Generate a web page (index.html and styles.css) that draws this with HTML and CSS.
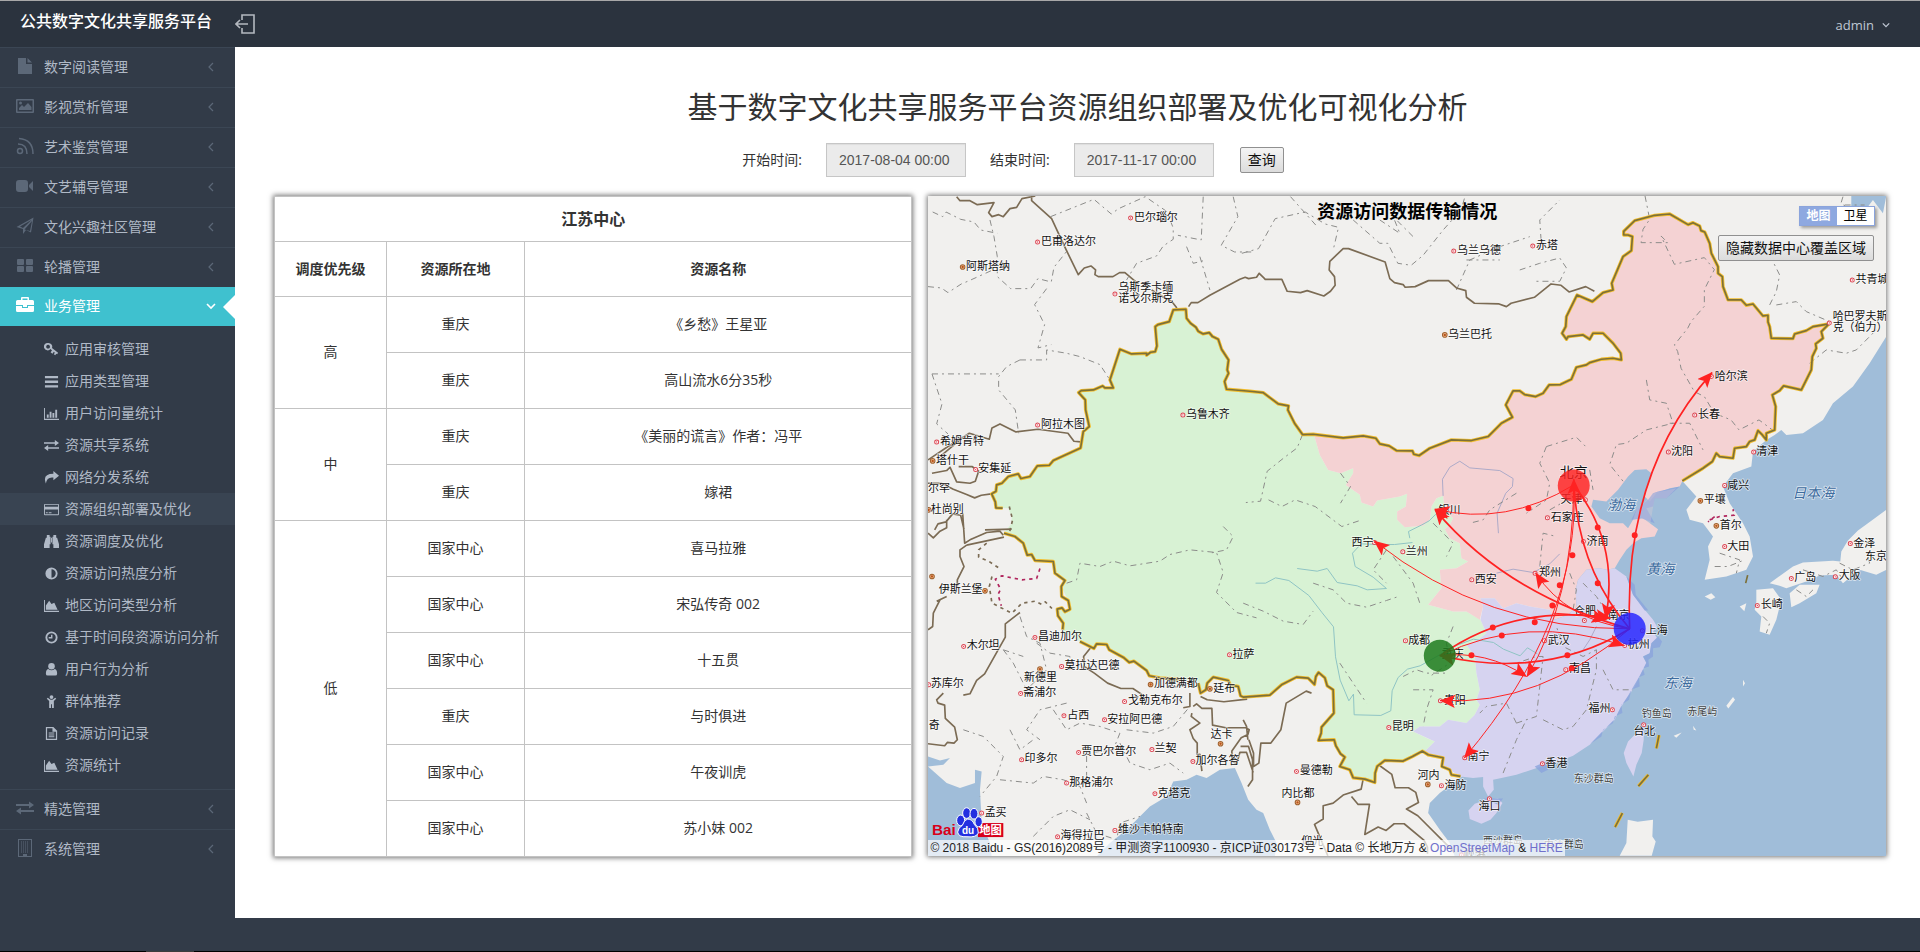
FILE: index.html
```html
<!DOCTYPE html>
<html lang="zh-CN">
<head>
<meta charset="utf-8">
<title>公共数字文化共享服务平台</title>
<link rel="stylesheet" href="styles.css">
</head>
<body>
<svg class="sprite" aria-hidden="true">
  <symbol id="i-file" viewBox="0 0 18 18"><path d="M2 1h8v6h6v10H2zM11.500 1l4.500 4.500h-4.500z"/></symbol>
  <symbol id="i-image" viewBox="0 0 18 18"><path fill-rule="evenodd" d="M1 2h16q1 0 1 1v12q0 1-1 1H1q-1 0-1-1V3q0-1 1-1zm.5 1.500v11h15v-11zM3 13v-2l3-3 2 2 4-4 3.500 4v3z"/><circle cx="4.500" cy="6" r="1.500"/></symbol>
  <symbol id="i-rss" viewBox="0 0 18 18"><g fill="none" stroke="currentColor" stroke-width="1.500"><circle cx="4" cy="14" r="2.500"/><path d="M2 7q9 0 9 10M3 1.500q14 1 14 15.500"/></g></symbol>
  <symbol id="i-video" viewBox="0 0 18 18"><path d="M3 3h6q3 0 3 3v6q0 3-3 3H3q-3 0-3-3V6q0-3 3-3zM13 8l4-4v10l-4-4z"/></symbol>
  <symbol id="i-plane" viewBox="0 0 18 18"><path fill-rule="evenodd" d="M17.500.5L15 15.500l-5-2.500-3 4v-5L.5 10zM15.500 3L4 9.500l3 1.500zm.5 1L8.500 12.500l5.500 1.500z"/></symbol>
  <symbol id="i-grid" viewBox="0 0 18 18"><path d="M2 2h5q1 0 1 1v4q0 1-1 1H2q-1 0-1-1V3q0-1 1-1zm9 0h5q1 0 1 1v4q0 1-1 1h-5q-1 0-1-1V3q0-1 1-1zM2 9h5q1 0 1 1v4q0 1-1 1H2q-1 0-1-1v-4q0-1 1-1zm9 0h5q1 0 1 1v4q0 1-1 1h-5q-1 0-1-1v-4q0-1 1-1z"/></symbol>
  <symbol id="i-case" viewBox="0 0 18 18"><path fill-rule="evenodd" d="M5 4V2q0-1 1-1h6q1 0 1 1v2h3.500Q18 4 18 5.500V9h-7v2H7V9H0V5.500Q0 4 1.500 4zm1.500 0h5V2.500h-5zM0 10h6v2h6v-2h6v4.500q0 1.500-1.500 1.500h-15Q0 16 0 14.500z"/></symbol>
  <symbol id="i-swap" viewBox="0 0 18 18"><path d="M0 5h13V2.500L18 6l-5 3.500V7H0zM18 11v2H5v2.500L0 12l5-3.500V11z"/></symbol>
  <symbol id="i-building" viewBox="0 0 18 18"><path fill-rule="evenodd" d="M2 0h14v18H2zm1 1v16h4v-2h4v2h4V1z"/><path d="M5 3h8M5 5h8M5 7h8M5 9h8M5 11h8M5 13h8" fill="none" stroke="currentColor" stroke-width="1" stroke-dasharray="1 1"/></symbol>
  <symbol id="i-key" viewBox="0 0 16 16"><path fill-rule="evenodd" d="M4.500 1a4 4 0 0 1 4 5.500l6.500 5-1 1.500-1-.5-1 1.500-1.500-1 1-1.500-1-1-1.500 2L7 11l1.500-2L7 7.500A4 4 0 1 1 4.500 1zm-.2 2a2 2 0 1 0 .1 0z"/></symbol>
  <symbol id="i-bars" viewBox="0 0 16 16"><path d="M1 2h14v2.500H1zM1 7h14v2.500H1zM1 12h14v2.500H1z"/></symbol>
  <symbol id="i-chart" viewBox="0 0 16 16"><path d="M0 2h1v11.500h15v1.300H0zM3 9h2v3.500H3zM6 6h2v6.500H6zM9 7.500h2v5H9zM12 4h2v8.500h-2z"/></symbol>
  <symbol id="i-share" viewBox="0 0 16 16"><path d="M10 1l6 5-6 5V8Q3 7 2 14.500-2 4 10 4z"/></symbol>
  <symbol id="i-card" viewBox="0 0 16 16"><path fill-rule="evenodd" d="M1 2h14q1 0 1 1v10q0 1-1 1H1q-1 0-1-1V3q0-1 1-1zm0 1v2h14V3zm0 5v5h14V8zm1 3h2v1H2zm3 0h3v1H5z"/></symbol>
  <symbol id="i-bino" viewBox="0 0 16 16"><path d="M3 1h3v2h1v8H6v4H0v-4l2-7h1zM13 1h-3v2H9v8h1v4h6v-4l-2-7h-1zM7.500 4h1v5h-1z"/></symbol>
  <symbol id="i-half" viewBox="0 0 16 16"><path fill-rule="evenodd" d="M8 1.500a6.500 6.500 0 1 1 0 13 6.500 6.500 0 0 1 0-13zm0 2a4.500 4.500 0 0 1 0 9z"/></symbol>
  <symbol id="i-area" viewBox="0 0 16 16"><path d="M0 2h1v11.500h15v1.300H0zM2 12.500V8l3.500-5L8 6.500l3-1.500 3.500 7.500z"/></symbol>
  <symbol id="i-clock" viewBox="0 0 16 16"><path fill-rule="evenodd" d="M8 1.500a6.500 6.500 0 1 1 0 13 6.500 6.500 0 0 1 0-13zm0 2a4.500 4.500 0 1 0 0 9 4.500 4.500 0 0 0 0-9zM7.500 5H9v4H5V7.500h2.500z"/></symbol>
  <symbol id="i-user" viewBox="0 0 16 16"><circle cx="8" cy="4.500" r="3.500"/><path d="M4.500 7.500Q8 10 11.500 7.500 14 8 14 12.500q0 2-2 2H4q-2 0-2-2Q2 8 4.500 7.500z"/></symbol>
  <symbol id="i-child" viewBox="0 0 16 16"><circle cx="8" cy="3.200" r="2"/><path d="M4 4l3 2h2l3-2 1 1-2.500 2.500V15h-2v-4h-1v4h-2V7.500L3 5z"/></symbol>
  <symbol id="i-doc" viewBox="0 0 16 16"><path fill-rule="evenodd" d="M2 1h8l4 4v10H2zm1.300 1.300v11.400h9.400V6H9V2.300zM5 7h6v1H5zm0 2h6v1H5zm0 2h6v1H5z"/></symbol>
  <symbol id="i-left" viewBox="0 0 10 10"><path d="M7 1L3 5l4 4" fill="none" stroke="currentColor" stroke-width="1.200"/></symbol>
  <symbol id="i-down" viewBox="0 0 10 10"><path d="M1 3l4 4 4-4" fill="none" stroke="currentColor" stroke-width="1.600"/></symbol>
</svg>

<header class="topbar">
  <a class="brand" href="#">公共数字文化共享服务平台</a>
  <button class="toggler" type="button" aria-label="收起菜单"><svg viewBox="0 0 20 20"><path d="M7 6V1h12v18H7v-5M1 10h12M5 6l-4 4 4 4" fill="none" stroke="currentColor" stroke-width="1.600"/></svg></button>
  <button class="account" type="button">admin <svg class="chev"><use href="#i-down"/></svg></button>
</header>

<div class="shell">
  <nav class="side">
    <ul class="menu">
      <li><a href="#"><svg class="ico"><use href="#i-file"/></svg><span>数字阅读管理</span><svg class="chev"><use href="#i-left"/></svg></a></li>
      <li><a href="#"><svg class="ico"><use href="#i-image"/></svg><span>影视赏析管理</span><svg class="chev"><use href="#i-left"/></svg></a></li>
      <li><a href="#"><svg class="ico"><use href="#i-rss"/></svg><span>艺术鉴赏管理</span><svg class="chev"><use href="#i-left"/></svg></a></li>
      <li><a href="#"><svg class="ico"><use href="#i-video"/></svg><span>文艺辅导管理</span><svg class="chev"><use href="#i-left"/></svg></a></li>
      <li><a href="#"><svg class="ico"><use href="#i-plane"/></svg><span>文化兴趣社区管理</span><svg class="chev"><use href="#i-left"/></svg></a></li>
      <li><a href="#"><svg class="ico"><use href="#i-grid"/></svg><span>轮播管理</span><svg class="chev"><use href="#i-left"/></svg></a></li>
      <li class="open"><a href="#"><svg class="ico"><use href="#i-case"/></svg><span>业务管理</span><svg class="chev"><use href="#i-down"/></svg></a>
        <ul class="sub">
          <li><a href="#"><svg><use href="#i-key"/></svg>应用审核管理</a></li>
          <li><a href="#"><svg><use href="#i-bars"/></svg>应用类型管理</a></li>
          <li><a href="#"><svg><use href="#i-chart"/></svg>用户访问量统计</a></li>
          <li><a href="#"><svg><use href="#i-swap"/></svg>资源共享系统</a></li>
          <li><a href="#"><svg><use href="#i-share"/></svg>网络分发系统</a></li>
          <li><a class="current" href="#"><svg><use href="#i-card"/></svg>资源组织部署及优化</a></li>
          <li><a href="#"><svg><use href="#i-bino"/></svg>资源调度及优化</a></li>
          <li><a href="#"><svg><use href="#i-half"/></svg>资源访问热度分析</a></li>
          <li><a href="#"><svg><use href="#i-area"/></svg>地区访问类型分析</a></li>
          <li><a href="#"><svg><use href="#i-clock"/></svg>基于时间段资源访问分析</a></li>
          <li><a href="#"><svg><use href="#i-user"/></svg>用户行为分析</a></li>
          <li><a href="#"><svg><use href="#i-child"/></svg>群体推荐</a></li>
          <li><a href="#"><svg><use href="#i-doc"/></svg>资源访问记录</a></li>
          <li><a href="#"><svg><use href="#i-area"/></svg>资源统计</a></li>
        </ul>
      </li>
      <li><a href="#"><svg class="ico"><use href="#i-swap"/></svg><span>精选管理</span><svg class="chev"><use href="#i-left"/></svg></a></li>
      <li><a href="#"><svg class="ico"><use href="#i-building"/></svg><span>系统管理</span><svg class="chev"><use href="#i-left"/></svg></a></li>
    </ul>
  </nav>

  <main class="content">
    <h1>基于数字文化共享服务平台资源组织部署及优化可视化分析</h1>
    <form class="filter">
      <label for="start">开始时间:</label><input id="start" type="text" value="2017-08-04 00:00" readonly>
      <label for="end">结束时间:</label><input id="end" type="text" value="2017-11-17 00:00" readonly>
      <button class="btn" type="button">查询</button>
    </form>
    <div class="panels">
      <section class="panel list">
        <table>
          <colgroup><col class="c1"><col class="c2"><col></colgroup>
          <thead>
            <tr class="cap"><th colspan="3">江苏中心</th></tr>
            <tr class="head"><th>调度优先级</th><th>资源所在地</th><th>资源名称</th></tr>
          </thead>
          <tbody>
            <tr><td rowspan="2">高</td><td>重庆</td><td>《乡愁》王星亚</td></tr>
            <tr><td>重庆</td><td>高山流水6分35秒</td></tr>
            <tr><td rowspan="2">中</td><td>重庆</td><td>《美丽的谎言》作者：冯平</td></tr>
            <tr><td>重庆</td><td>嫁裙</td></tr>
            <tr><td rowspan="6">低</td><td>国家中心</td><td>喜马拉雅</td></tr>
            <tr><td>国家中心</td><td>宋弘传奇 002</td></tr>
            <tr><td>国家中心</td><td>十五贯</td></tr>
            <tr><td>重庆</td><td>与时俱进</td></tr>
            <tr><td>国家中心</td><td>午夜训虎</td></tr>
            <tr><td>国家中心</td><td>苏小妹 002</td></tr>
          </tbody>
        </table>
      </section>

      <section class="panel map">
        <svg class="canvas" viewBox="24 18 2874 1980" preserveAspectRatio="xMidYMid slice">
          <defs>
            <marker id="tip" markerUnits="userSpaceOnUse" markerWidth="50" markerHeight="44" refX="44" refY="20" orient="auto"><path d="M0 0L46 20 0 40 10 20z" fill="#f22"/></marker>
            <path id="towns" d="M632 84h0M353 156h0M585 312h0M353 705h0M50 756h0M167 839h0M789 675h0M1602 183h0M1839 168h0M1883 984h0M1997 930h0M2798 270h0M2729 399h0M2375 560h0M2325 675h0M2246 786h0M2502 786h0M2415 887h0M131 1370h0M345 1343h0M425 1430h0M26 1485h0M302 1511h0M432 1578h0M614 1535h0M554 1590h0M696 1679h0M305 1710h0M476 1688h0M819 1715h0M440 1780h0M705 1812h0M185 1870h0M413 1941h0M585 1922h0M929 1395h0M1364 1058h0M1449 1086h0M1656 1170h0M1846 1150h0M1457 1353h0M1874 1353h0M1562 1533h0M1407 1613h0M1635 1704h0M1130 1745h0M1565 1788h0M1709 1827h0M1868 1722h0M1625 1996h0M1991 1055h0M1994 1292h0M2058 1280h0M2168 1323h0M2115 1367h0M1938 1440h0M2078 1560h0M2172 1605h0M2415 1070h0M2615 1166h0M2747 1161h0M2792 1061h0M2513 1247h0"/>
            <path id="capitals" d="M128 231h0M38 813h0M26 960h0M1575 435h0M2342 933h0M2390 1008h0M36 1160h0M195 1203h0M360 1438h0M692 1484h0M870 1497h0M902 1662h0M1133 1838h0M1524 1784h0"/>
            <path id="frontier" d="M248 955L228 954 226 936 215 912 228 904 230 885 246 880 265 860 295 852 303 866 330 860 352 828 388 826 400 812 482 774 490 725 508 710 497 660 496 630 476 608 484 602 520 600 548 588 555 594 580 594 570 570 600 478 635 492 680 490 680 496 692 487 706 485 711 468 706 410 714 404 748 395 760 360 798 358 800 385 812 400 828 412 835 424 850 432 868 428 878 440 895 448 905 478 926 510 922 540 926 550 914 575 920 598 990 604 1030 608 1075 642 1106 648 1104 660 1124 700 1148 734 1180 733 1270 744 1330 738 1368 745 1380 762 1408 768 1430 782 1478 783 1482 793 1498 797 1530 775 1595 750 1655 752 1705 740 1745 700 1778 682 1758 645 1780 603 1800 603 1815 614 1848 620 1870 610 1888 585 1922 584 1955 568 1970 532 2000 525 2010 518 2045 508 2080 505 2105 510 2103 490 2080 460 2050 430 2020 430 2010 448 1990 435 1945 440 1940 448 1927 430 1938 410 1940 380 1972 315 2018 335 2050 308 2080 300 2076 280 2110 200 2135 182 2138 140 2125 135 2112 135 2112 124 2145 92 2205 76 2250 72 2305 104 2320 98 2340 108 2344 122 2355 126 2370 160 2375 190 2395 230 2395 250 2408 260 2410 290 2425 330 2465 330 2480 346 2500 342 2530 378 2545 376 2545 396 2550 410 2555 445 2620 446 2625 432 2660 422 2680 410 2728 402 2705 425 2710 445 2688 462 2690 475 2678 500 2675 540 2645 600 2592 588 2580 602 2558 615 2568 650 2565 720 2540 730 2540 750 2528 735 2515 722 2505 750 2490 755 2480 770 2445 775 2440 805 2400 800 2390 790 2378 815 2350 835 2288 873M252 1030L285 1040 310 1060 322 1096 335 1094 345 1112 400 1115 405 1150 435 1172 424 1190 425 1220 445 1232 450 1258 435 1266 426 1254 412 1258 414 1278 430 1300 428 1320M480 1355L522 1376 530 1362 560 1364 568 1380 612 1404 628 1418 642 1414 680 1442 688 1458 720 1464 778 1468M835 1480L842 1510 858 1500 862 1480 880 1462 925 1472 932 1486 955 1490 962 1518 970 1522 1050 1516 1085 1485 1130 1462 1165 1465 1184 1484 1188 1460 1196 1448 1215 1464 1222 1488 1240 1500 1242 1570 1205 1612 1204 1630 1196 1652 1243 1650 1248 1668 1262 1692 1275 1702 1260 1730 1290 1740 1300 1764 1335 1768 1365 1778 1366 1750 1372 1730 1395 1712 1450 1714 1478 1700 1508 1684 1525 1695 1570 1704 1566 1730 1590 1740 1595 1755 1622 1760"/>
          </defs>

          <rect class="land" x="0" y="0" width="2920" height="2000"/>
          <path class="sea" d="M2900 440L2850 520 2800 590 2740 640 2710 690 2650 730 2600 735 2585 720 2565 735 2540 750 2500 785 2495 830 2440 850 2410 890 2430 940 2470 1000 2490 1040 2500 1100 2480 1140 2420 1160 2355 1170 2370 1110 2365 1070 2380 1040 2350 1000 2310 990 2300 960 2330 920 2288 873 2215 850 2115 810 1955 930 1955 1050 1875 1350 1760 1700 1640 1750 1600 1780 1560 1810 1530 1840 1525 1870 1560 1920 1590 1960 1605 2000H2900zM530 2000L570 1960 620 1920 690 1850 740 1820 760 1775 800 1770 830 1755 860 1765 900 1740 945 1735 965 1780 985 1830 1010 1860 1030 1870 1050 1920 1070 1960 1065 2000zM24 1700L60 1712 90 1705 70 1725 24 1730 80 1780 120 1795 165 1780 165 1740 185 1745 180 1800 185 1900 210 1960 215 2000H20zM2795 18L2795 60 2830 70 2860 30 2890 70 2900 18z"/>
          <path class="land" d="M2510 1200L2560 1195 2585 1230 2570 1290 2550 1335 2520 1325 2525 1280 2505 1260 2510 1235zM2550 1180L2620 1130 2650 1118 2740 1113 2762 1115 2765 1085 2785 1052 2815 1022 2845 1000 2900 960V1140L2870 1155 2820 1140 2770 1180 2750 1155 2700 1157 2660 1175 2600 1195 2580 1188zM2610 1210L2640 1185 2700 1185 2690 1210 2640 1240 2615 1252zM2355 1220L2375 1210 2387 1222 2373 1230zM2124 1890L2154 1896 2200 1890 2198 1940 2208 1955 2196 1998H2100L2120 1960zM2420 1548L2440 1522 2446 1530 2426 1556zM2262 1638L2286 1628 2270 1644zM2320 1608L2330 1622 2322 1620zM2470 1470L2476 1480 2470 1490zM2460 1250L2480 1240 2474 1264z"/>

          <path class="zone west" d="M760 360L798 358 800 385 828 412 850 432 868 428 895 448 905 478 926 510 922 540 926 550 914 575 920 598 990 604 1030 608 1075 642 1106 648 1104 660 1124 700 1148 734 1182 733 1200 795 1225 840 1262 850 1300 835 1300 850 1278 885 1320 915 1325 938 1360 950 1372 932 1440 920 1462 912 1458 950 1432 965 1432 990 1455 1012 1510 1008 1530 990 1535 950 1550 925 1570 918 1575 960 1600 985 1590 1005 1575 1018 1590 1045 1620 1060 1625 1105 1645 1115 1610 1135 1560 1140 1565 1195 1525 1245 1600 1265 1640 1265 1682 1290 1700 1330 1675 1350 1640 1365 1665 1400 1670 1450 1680 1500 1670 1530 1680 1545 1665 1575 1640 1600 1585 1590 1560 1610 1500 1610 1480 1625 1520 1645 1545 1655 1520 1680 1508 1684 1478 1700 1450 1714 1395 1712 1372 1730 1365 1778 1300 1764 1290 1740 1260 1730 1275 1702 1248 1668 1243 1650 1196 1652 1205 1612 1242 1570 1240 1500 1222 1488 1215 1464 1196 1448 1184 1484 1165 1465 1130 1462 1085 1485 1050 1516 970 1522 955 1490 932 1486 925 1472 880 1462 862 1480 842 1510 835 1475 780 1468 720 1464 688 1458 680 1442 642 1414 628 1418 568 1380 560 1364 530 1362 522 1376 480 1355 428 1325 430 1300 412 1258 448 1262 445 1232 424 1190 435 1172 405 1150 400 1115 345 1112 322 1096 310 1060 285 1040 252 1030 275 1000 275 980 265 955 228 954 215 912 230 885 265 860 295 852 303 866 330 860 352 828 388 826 400 812 482 774 490 725 508 710 497 660 496 630 476 608 520 600 548 588 580 594 570 570 600 478 635 492 680 494 706 485 711 468 706 410 748 395z"/>
          <path class="zone north" d="M1182 733L1270 744 1330 738 1368 745 1380 762 1430 782 1478 783 1498 797 1530 775 1595 750 1655 752 1705 740 1745 700 1778 682 1758 645 1780 603 1800 603 1815 614 1848 620 1870 610 1888 585 1922 584 1955 568 1970 532 2010 518 2080 505 2105 510 2103 490 2050 430 2020 430 2010 448 1990 435 1940 448 1927 430 1940 380 1972 315 2018 335 2050 308 2080 300 2076 280 2110 200 2135 182 2138 140 2112 135 2112 124 2145 92 2205 76 2250 72 2305 104 2320 98 2340 108 2355 126 2370 160 2375 190 2395 230 2408 260 2410 290 2425 330 2465 330 2480 346 2500 342 2530 378 2545 376 2555 445 2620 446 2625 432 2680 410 2728 402 2705 425 2710 445 2688 462 2678 500 2675 540 2645 600 2592 588 2558 615 2568 650 2565 720 2540 730 2540 750 2515 722 2505 750 2480 770 2445 775 2440 805 2400 800 2390 790 2378 815 2350 835 2288 873 2280 890 2250 895 2210 910 2190 935 2175 920 2195 850 2180 838 2145 840 2125 860 2095 900 2060 935 2020 930 2015 950 2040 985 2070 1000 2110 1000 2125 1015 2140 990 2170 985 2215 1018 2205 1040 2165 1045 2140 1060 2120 1080 2100 1110 2085 1135 2060 1140 2040 1135 2000 1140 1975 1170 1968 1200 1970 1250 1945 1275 1905 1290 1890 1260 1830 1250 1790 1240 1750 1255 1725 1225 1682 1225 1690 1250 1680 1290 1640 1265 1600 1265 1525 1245 1565 1195 1560 1140 1610 1135 1645 1115 1625 1105 1620 1060 1590 1045 1575 1018 1590 1005 1600 985 1575 960 1570 918 1550 925 1535 950 1530 990 1510 1008 1455 1012 1432 990 1432 965 1458 950 1462 912 1440 920 1372 932 1360 950 1325 938 1320 915 1278 885 1300 850 1300 835 1262 850 1225 840 1200 795z"/>
          <path class="zone south" d="M1682 1290L1690 1250 1682 1225 1725 1225 1750 1255 1790 1240 1830 1250 1890 1260 1905 1290 1945 1275 1970 1250 1968 1200 1975 1170 2000 1140 2040 1135 2060 1140 2085 1135 2120 1160 2140 1215 2175 1260 2200 1290 2212 1310 2200 1325 2212 1345 2195 1360 2190 1390 2170 1400 2180 1420 2160 1460 2145 1490 2125 1520 2105 1550 2085 1590 2055 1620 2010 1665 1960 1698 1900 1722 1860 1732 1820 1745 1790 1755 1745 1765 1720 1770 1722 1800 1705 1820 1690 1790 1690 1762 1660 1765 1622 1760 1590 1740 1566 1730 1570 1704 1525 1695 1508 1684 1520 1680 1545 1655 1480 1625 1500 1610 1560 1610 1585 1590 1640 1600 1665 1575 1680 1545 1670 1530 1680 1500 1670 1450 1665 1400 1640 1365 1675 1350 1700 1330zM1646 1862L1665 1842 1700 1830 1735 1826 1748 1840 1730 1870 1712 1890 1685 1902 1650 1888zM2172 1605L2150 1630 2125 1655 2112 1690 2120 1720 2141 1760 2150 1725 2166 1690 2172 1650z"/>
          <path class="shelf" d="M2215 1340L2227 1355 2220 1372 2200 1375 2200 1400 2186 1410 2188 1430 2170 1436 2175 1455 2158 1462 2160 1490 2135 1500 2128 1530 2105 1545 2108 1570 2085 1580 2080 1600 2050 1620 2045 1640 2012 1662 2055 1618 2085 1588 2105 1548 2125 1518 2160 1458 2180 1418 2170 1400 2190 1390 2195 1360zM2120 1160L2145 1185 2148 1215 2186 1262 2175 1262 2140 1215zM2200 910L2215 905 2280 890 2240 925 2205 925 2200 950 2180 955 2205 1000 2165 985 2135 990 2150 960 2185 930zM1845 1730L1885 1712V1740L1865 1750zM1690 1826L1750 1826 1735 1845z"/>
          <path class="zone north faint" d="M2200 910L2270 895 2240 925 2205 925 2190 1010 2140 990 2150 960z"/>

          <path class="river" d="M1007 1180h30l30-16 40 8 60 45 40 52 34 42 6 90 14 70 26 62 14-20 2 62 80 2 30-14 4-60 18-40 28-25 38-10 50-28 50-30 60-22 60 10 30 20 50 20 22-24 30 18M1132 1136l60 8 30-8 30 42 60 10 30 12 58-4-40-34-54-32-8-40 26-28 50 2 50 0 54-6M1470 1045l-4-20 40-20 22-12 20-20"/>
          <path class="river grey" d="M1570 918l-2-50 22-36 30-18 30 20 90 8 40 24-2 24-20 20-26 60 4 60M1730 1150l50-12 60 10 50-26 30-30M1990 1380l20-30 20-40"/>

          <path class="prov" d="M38 66l30 14 10-14 44 22 40 8 20 24 50 10M210 90l12 50 10 60 0 60 40 36 60 0 22-30 40 10 8-44 40-50M24 290l40 4 20 14 40-26 24-10 66-30M392 80l70-28 60-24 52 44 22-16 80-36 64 44 20 50 0 34-30 20-20 30-60 22-30 50M380 296l-36 48 30 60-20 70 40-10M300 510l80 0 0-30 60 10 40 10 60 24 30 46M300 510l-40 20-24 30 0 40 50 60 10 70M36 552h200M36 552l30 90-16 60 34 30M850 20l-6 130-70-14M800 170l20 50 40-10M840 200l30 100M940 20l14 60-50 86 40 20 50 0M966 190l50-14 50-90 90-20 60 36 40 10-14 60M1112 20l80 90M1300 90l80 70 24 0 30 60 40 6 36-30 60-76 54-60 20-70M1380 90l60 40-20-50 60 60M1610 300l40-90 90-40 90-30M1864 150l-4-60 60-60M1800 240l60-20 60-16 20 30-20 40-80 0M1640 210l100 0M2176 18l14 70-20 30-6 40 80 0-20-20 40 85 90-20 30 36-30 60 0 50-40 46-10 20-40 50 10 20 10 50 40 70 30 15 30 50 50 20 24 30 60-30 40 30M2180 570l10 60 50 10 20 60-80 20-60 40-30 4-20 60 40 50M2250 700l60 0 40 80M1880 770l-20 50 30 60-10 50-60 40M1880 770l90-28 30 30M1148 734l-16 40-40 30-50 40-20 90-44 4M1046 930l40 20 40-20 60 20 80 60 60-20M1262 850l30 40-30 50M1790 910l-80 50-20 30-40 10M970 1240l60 24 60 30 60 10 30-40M1180 1180l60 20 40 40 60 12 60-20 30-10M1400 1080l-40 60 40 40M1420 1100l60 80 20 60M1540 1000l60 60-20 40M1600 1310l-20 50 10 60-60 40M1480 1500l60 0-20 60-10 50M1260 1420l40 60 40 60M1450 1460l40-20 30 10 60 0M1790 1600l-30-60-60 10-20 20M1790 1600l60-20 20-180-20 0-60 20M1870 1590l60 30 30-10 40-50 30-120 0-60-40 20-60-30-20-60M1750 1750l40-100 30-60M2050 1440l30 60 60 0M1950 1150l20 50-10 60M1990 1180l40 40 40 60M1860 1130l10-100 40 10M440 1180l30-10 10-50 60 10 40-16 50 14 90-14 30-20 60-14 80 8 20 60-20 60 60 60 60 16M910 1010l30 30-20 40-50 10M1890 960l70-40M2010 840l10 60M300 1280l20 60 40 20 20 80-50 50M250 1380l30 40 40 80M250 1380l60 20M350 1360l40 30 60 10 0 40M440 1540l-80 20-40 60 40 30M400 1560l40 60 40-20 60 10 60 20-20 50-80 10 0 70M620 1620l80 10 60-20 50-60M600 1660l30 60 60 20 60-20 40 30M130 1620l60 20 60 60-20 60-50 60M240 1770l100 10 30-20 60 10 50 20 20 50M340 1940l60-60 50-20 60 30M500 1870l30 60 60 20 10-50 60-20M270 1620l30 60 40-30"/>
          <path class="prov" d="M2550 345l20-40 10-50-20-40M2570 345l60-10 30 30 70 30M2670 520l50-40 60 10 30-10 60-60M2770 20l-6 20 30 20 60-10M2775 45l60 0M2385 1130l40 0 50-20M2400 1090l60 20-10 40M2760 1120l40 20 50-20-10-40M2650 1140l60 20 40-20 20 30M2530 1280l20 20-10 30M2630 1200l30 20 20-20"/>
          <path class="nation" d="M110 20l10 12 30 0 22 12 50-6-16 30 10 12 20-6 14 6 20-24 20-4 16-26 40-8M335 18l0 14 60 54 38 82 42 86 18-20 20-6 14 12-2 14 10 6h44l20-12 16 0 40 34M695 300l40 24 20 10 16 20M806 350l8-12 20 0 36-22 90-48 16-6 10 4 24-4 8-12 14 14 4 4h50l16 36 40 4 20-6 50 16 20-14 14-18-2-26-16-20 2-26 40-38 16 0 110 40 14 50 14 12 26 6 6 8 30-2 40-18h60l24 22 28 8 2 20 24 18 74 2 22 8 14-10 70-18 50-40 30 4 24 20 50-16 26 14M24 810l60-40 40-24 24-16 60 18 8-34 24-12 48 24 66-8 90 12 18 24 20 2M60 800l60-50M24 880l40 0 36 18 40 16 24 10 20-8 30-4M36 850l44-8 10-10 20 44 40 4 16-6 10-30-20-14-40 0M44 1020l10-18 24-6 20-24 24 4 10 42M195 1020l80-2M24 1030l16 14 20-20 20-10V990M128 970l6 90 16-10 50-22 40-4 10 12M140 1066l-20 14 0 20 12 30-20 40 0 20M252 1042l-112 24M60 1230l-20 40-2 40-14 10M80 1220l-30 14M300 1268l-44 34 0 40-62 110-24 20-20 40-20 4M70 1510l-20 20 4 10 20 6 2 40 28 26 8 38-10 10-20-2-8 10-50-6M515 1370l-24 30 2 30 30 20 40 30 40 16 36 0 30 20M810 1510l0 40-20 4M842 1520l20 10 50 6 70-8M816 1570l-2 10 26 20-30 20 10 26 12 14 0 34 8 0 6 50M820 1550l10-8 16 14h30l2 50 40 8h60l10 6-4 14-20 10-28 40 0 30 14 8 10-34 20 0 20 60M970 1590l10 20 4 40M962 1670l24 0 12 40 0 60-14 20M1175 1510l-16-6-60 36-16 80-30 40h-30l-6 60-16 10 0-40-14-40M1330 1768l-6 30-54 18-30 24-30 8 0 40-26 16 40 94M1295 1820l20 24 34 0-14 90 40-22 24 10 24-20 30 0 60 50 10 20 0 20M1380 1728l36 26 10 40 40 0 22 14 8 30-36 20 34 20 110 110"/>
          <path class="claim" d="M268 950l10 40-10 40M200 1060l-24 20 0 22 30 12 30 20M216 1160l-8 30 8 50 60 30 30-30 40-6 20 10 10-8 20 20"/>
          <path class="ceasefire" d="M360 1136l-10 30-44 4-60-12-20 10 16 30-8 16 10 34M2370 990l30-10 44-4-4-18M2385 980l-20 16"/>
          <use class="front-glow" href="#frontier"/>
          <use class="front-line" href="#frontier"/>
          <path class="front-glow" d="M2218 1636l-8 40M2186 1755l-30 34M2108 1870l-22 42"/>
          <path class="front-line" d="M2218 1636l-8 40M2186 1755l-30 34M2108 1870l-22 42M2484 1156l-6 24"/>

          <use class="town-o" href="#towns"/><use class="town-i" href="#towns"/><use class="town-c" href="#towns"/>
          <use class="cap-o" href="#capitals"/><use class="cap-i" href="#capitals"/><use class="cap-c" href="#capitals"/>

          <g class="names">
            <text x="642" y="93">巴尔瑙尔</text><text x="363" y="165">巴甫洛达尔</text><text x="138" y="239">阿斯塔纳</text>
            <text x="595" y="303">乌斯季卡缅</text><text x="595" y="336">诺戈尔斯克</text><text x="363" y="713">阿拉木图</text>
            <text x="60" y="764">希姆肯特</text><text x="48" y="821">塔什干</text><text x="175" y="847">安集延</text><text x="24" y="907">尔罕</text><text x="32" y="968">杜尚别</text><text x="798" y="683">乌鲁木齐</text>
            <text x="1612" y="192">乌兰乌德</text><text x="1849" y="176">赤塔</text><text x="1585" y="443">乌兰巴托</text><text class="big" x="1920" y="862">北京</text><text x="1556" y="972">银川</text><text x="1893" y="993">石家庄</text><text x="1922" y="940">天津</text>
            <text x="2808" y="279">共青城</text><text x="2739" y="391">哈巴罗夫斯</text><text x="2739" y="424">克（伯力）</text><text x="2385" y="569">哈尔滨</text><text x="2335" y="683">长春</text><text x="2254" y="794">沈阳</text><text x="2510" y="794">清津</text><text x="2423" y="896">咸兴</text><text x="2352" y="940">平壤</text><text x="2400" y="1016">首尔</text>
            <text x="56" y="1211">伊斯兰堡</text><text x="140" y="1379">木尔坦</text><text x="354" y="1352">昌迪加尔</text><text x="312" y="1474">新德里</text><text x="434" y="1439">莫拉达巴德</text><text x="32" y="1493">苏库尔</text><text x="310" y="1520">斋浦尔</text><text x="26" y="1618">奇</text><text x="442" y="1587">占西</text><text x="624" y="1544">戈勒克布尔</text><text x="562" y="1599">安拉阿巴德</text><text x="702" y="1493">加德满都</text><text x="880" y="1506">廷布</text><text x="872" y="1645">达卡</text><text x="704" y="1688">兰契</text><text x="314" y="1718">印多尔</text><text x="484" y="1697">贾巴尔普尔</text><text x="827" y="1724">加尔各答</text><text x="448" y="1788">那格浦尔</text><text x="713" y="1821">克塔克</text><text x="194" y="1878">孟买</text><text x="422" y="1949">海得拉巴</text><text x="594" y="1931">维沙卡帕特南</text><text x="938" y="1404">拉萨</text>
            <text x="1295" y="1067">西宁</text><text x="1458" y="1095">兰州</text><text x="1665" y="1179">西安</text><text x="1858" y="1160">郑州</text><text x="1465" y="1362">成都</text><text x="1566" y="1406">重庆</text><text x="1884" y="1362">武汉</text><text x="1572" y="1542">贵阳</text><text x="1416" y="1622">昆明</text><text x="1643" y="1712">南宁</text><text x="1140" y="1754">曼德勒</text><text x="1085" y="1823">内比都</text><text x="1493" y="1769">河内</text><text x="1574" y="1797">海防</text><text x="1676" y="1860">海口</text><text x="1877" y="1731">香港</text><text x="1144" y="1966">仰光</text><text x="1632" y="2006">岘港</text>
            <text x="2000" y="1064">济南</text><text x="1963" y="1276">合肥</text><text x="2064" y="1288">南京</text><text x="2178" y="1332">上海</text><text x="2124" y="1376">杭州</text><text x="1948" y="1448">南昌</text><text x="2006" y="1568">福州</text><text x="2141" y="1637">台北</text><text x="2423" y="1079">大田</text><text x="2624" y="1175">广岛</text><text x="2757" y="1169">大阪</text><text x="2801" y="1070">金泽</text><text x="2836" y="1109">东京</text><text x="2523" y="1256">长崎</text>
            <g class="isle"><text x="2166" y="1582">钓鱼岛</text><text x="2303" y="1577">赤尾屿</text><text x="1962" y="1777">东沙群岛</text><text x="1690" y="1964">西沙群岛</text><text x="1872" y="1975">中沙群岛</text></g>
            <g class="water"><text x="2618" y="925">日本海</text><text x="2062" y="961">渤海</text><text x="2180" y="1153">黄海</text><text x="2232" y="1496">东海</text></g>
          </g>

          <g class="routes">
            <path d="M1962 885Q1760 1010 1545 958"/>
            <path class="w" d="M2130 1317Q1760 1215 1546 960"/>
            <path d="M2130 1317Q1700 1320 1364 1054"/>
            <path class="w" d="M1560 1398Q1780 1240 2072 1285"/>
            <path d="M1560 1398Q1820 1270 2112 1367"/>
            <path d="M1560 1398Q1700 1380 1820 1460"/>
            <path class="w" d="M2130 1317Q1880 1470 1562 1398"/>
            <path d="M2130 1317Q1860 1550 1562 1532"/>
            <path d="M1962 885Q1960 1230 1822 1460"/>
            <path d="M1962 885Q1985 1290 1634 1704"/>
            <path class="w" d="M1962 885Q2100 1060 2058 1286"/>
            <path class="w" d="M2130 1317Q1970 1130 1962 868"/>
            <path class="w" d="M2130 1317Q2110 850 2377 548"/>
            <path d="M2130 1317Q1940 1290 1848 1150"/>
            <path d="M1900 1270Q2000 1275 2060 1290"/>
          </g>
          <path class="beads" d="M1826 955h0M1898 1247h0M1845 1297h0M1719 1313h0M1746 1337h0M1655 1396h0M1943 1396h0M1956 1435h0M1920 1186h0M1958 1096h0M2034 1013h0M2034 1180h0M2145 1036h0"/>
          <circle cx="1962" cy="887" r="48" fill="#f22" opacity=".82"/>
          <circle cx="2130" cy="1317" r="48" fill="#22f" opacity=".82"/>
          <circle cx="1560" cy="1398" r="48" fill="#1b7a1b" opacity=".84"/>

          <g class="logo">
            <rect x="174" y="1900" width="76" height="42" fill="#d8001b"/>
            <text x="36" y="1937" fill="#d8001b">Bai</text>
            <g fill="#2430e0" stroke="#fff" stroke-width="3"><ellipse cx="122" cy="1892" rx="12" ry="16"/><ellipse cx="140" cy="1870" rx="12" ry="16"/><ellipse cx="162" cy="1872" rx="12" ry="16"/><ellipse cx="176" cy="1896" rx="11" ry="15"/><path d="M143 1888q14 0 20 16 14 12 12 26-6 14-34 11-26 2-28-14 2-14 14-20 6-18 16-19z"/></g>
            <text class="du" x="126" y="1934">du</text>
            <text class="dt" x="178" y="1934">地图</text>
          </g>
        </svg>
        <h2 class="map-title">资源访问数据传输情况</h2>
        <div class="map-type"><button class="on" type="button">地图</button><button type="button">卫星</button></div>
        <button class="btn toggle-zone" type="button">隐藏数据中心覆盖区域</button>
        <p class="credit">© 2018 Baidu - GS(2016)2089号 - 甲测资字1100930 - 京ICP证030173号 - Data © 长地万方 &amp; <a href="#">OpenStreetMap</a> &amp; <a href="#">HERE</a></p>
      </section>
    </div>
  </main>
</div>
<footer class="dock"><span></span></footer>
</body>
</html>
```
FILE: styles.css
```css
* { box-sizing: border-box; }
body { margin: 0; min-height: 100vh; display: flex; flex-direction: column; background: #323b48; color: #333; font: 14px/20px "Open Sans", "Noto Sans CJK SC", sans-serif; }
ul { list-style: none; margin: 0; padding: 0; }
a { color: inherit; text-decoration: none; }
button { font: inherit; cursor: pointer; }
svg { fill: currentColor; }
.sprite { position: absolute; width: 0; height: 0; }

.topbar { height: 47px; display: flex; align-items: center; padding-right: 30px; background: #2b333e; border-top: 1px solid #a8a8a8; }
.brand { width: 235px; padding: 0 0 6px 20px; color: #fff; font-size: 16px; font-weight: 500; }
.toggler { padding: 0; border: 0; background: none; color: #b4b9c0; line-height: 0; }
.toggler svg { width: 20px; height: 20px; }
.account { margin-left: auto; display: flex; align-items: center; gap: 8px; padding: 2px 0 0; border: 0; background: none; color: #bfc7d3; font-size: 13px; }
.chev { width: 10px; height: 10px; }
.account .chev { width: 8px; height: 8px; }

.shell { flex: 1; display: flex; align-items: stretch; }
.side { width: 235px; flex: none; color: #b0b9c6; }
.menu > li > a { display: flex; align-items: center; height: 40px; padding: 0 19px 2px 16px; border-top: 1px solid #3b4654; }
.menu .ico { width: 18px; height: 18px; margin: 0 10px 2px 0; color: #5c6878; }
.menu > li > a .chev { margin-left: auto; color: #5c6878; }
.menu > .open > a { position: relative; height: 39px; border: 0; background: #3fc1cf; color: #fff; }
.menu > .open > a::after { content: ""; position: absolute; right: 0; top: 8px; border: 12px solid transparent; border-left: 0; border-right-color: #fff; }
.menu > .open .ico, .menu > .open > a .chev { color: #fff; }
.sub { padding: 7px 0 8px; }
.sub a { display: flex; align-items: center; gap: 6px; height: 32px; padding-left: 44px; }
.sub svg { width: 15px; height: 15px; flex: none; }
.sub .current { background: #394452; }

.content { flex: 1; min-width: 0; padding: 40px 34px 61px 39px; background: #fff; }
h1 { margin: 0 0 16px; padding-right: 5px; color: #333; font-size: 30px; line-height: 40px; font-weight: 400; text-align: center; }
.filter { display: flex; align-items: center; justify-content: center; gap: 24px; height: 34px; margin-bottom: 19px; padding-right: 134px; }
.filter input { width: 140px; height: 34px; padding: 6px 12px; border: 1px solid #c6c6c6; background: #ebebeb; color: #555; font: 14px/20px "Liberation Sans", sans-serif; box-shadow: inset 0 1px 1px #ddd; }
.btn { height: 26px; padding: 0 7px; border: 1px solid #909090; border-radius: 2px; background: linear-gradient(#f4f4f4, #dcdcdc); color: #111; line-height: 22px; }
.filter .btn { margin-left: 2px; }
.panels { display: grid; grid-template-columns: 2fr 3fr; gap: 16px; align-items: start; }
.panel { background: #fff; box-shadow: 0 0 5px 1px #777; }

table { width: 100%; border-collapse: collapse; table-layout: fixed; text-align: center; }
.c1 { width: 112px; }
.c2 { width: 138px; }
th, td { height: 56px; padding: 0 0 2px; border: 1px solid #c3c3c3; }
.cap th { height: 45px; padding: 0; font-size: 16px; }
.head th { height: 55px; padding: 0; }

.map { position: relative; overflow: hidden; }
.canvas { display: block; width: 100%; height: auto; }
.map-title { position: absolute; top: 2px; left: 0; right: 0; margin: 0; color: #000; font-size: 18px; line-height: 26px; text-align: center; }
.map-type { position: absolute; top: 10px; right: 11px; display: flex; border: 1px solid #8ba4dc; background: #fff; box-shadow: 2px 2px 3px rgba(0, 0, 0, .35); }
.map-type button { width: 37px; height: 18px; padding: 0; border: 0; background: none; color: #000; font-size: 12px; line-height: 18px; }
.map-type .on { background: #8ea8e0; color: #fff; font-weight: 700; }
.toggle-zone { position: absolute; top: 39px; right: 12px; }
.credit { position: absolute; left: 0; bottom: 0; margin: 0; padding: 0 2px; background: rgba(255, 255, 255, .7); color: #222; font: 12px/16px "Liberation Sans", "Noto Sans CJK SC", sans-serif; white-space: nowrap; }
.credit a { color: #7070cc; }

.land { fill: #f1f0ee; }
.sea { fill: #a0bdd9; }
.west { fill: #d8f2d4; }
.north { fill: #f4d2d3; }
.south { fill: #d6d3f0; }
.faint { opacity: .25; }
.shelf { fill: #8ba4dc; opacity: .8; }
.river, .prov, .nation, .claim, .ceasefire, .front-glow, .front-line, .routes path { fill: none; stroke-linejoin: round; }
.river { stroke: #8fc4c4; stroke-width: 3; }
.river.grey { stroke: #adaac8; }
.prov { stroke: #8c8c8a; stroke-width: 3; stroke-dasharray: 18 12 6 12; }
.nation { stroke: #7b6b54; stroke-width: 5; }
.claim { stroke: #7b6b54; stroke-width: 5; stroke-dasharray: 10 12; }
.ceasefire { stroke: #b0245c; stroke-width: 5; stroke-dasharray: 10 12; }
.front-glow { stroke: #f2bd2c; stroke-width: 10; }
.front-line { stroke: #7d7038; stroke-width: 5; }
.town-o, .town-i, .town-c, .cap-o, .cap-i, .cap-c { stroke-linecap: round; }
.town-o { stroke: #dd4855; stroke-width: 15; }
.town-i { stroke: #fff; stroke-width: 9; }
.town-c { stroke: #dd4855; stroke-width: 4; }
.cap-o { stroke: #a0622f; stroke-width: 17; }
.cap-i { stroke: #f0b98c; stroke-width: 11; }
.cap-c { stroke: #b9541c; stroke-width: 7; }
.names { fill: #111; font: 33px "Noto Sans CJK SC", sans-serif; stroke: rgba(255, 255, 255, .6); stroke-width: 5; stroke-linejoin: round; paint-order: stroke; }
.names .big { font-size: 42px; }
.isle { font-size: 30px; fill: #444; }
.water { font-size: 42px; font-style: italic; fill: #3d6b9e; }
.routes path { stroke: #f22; stroke-width: 3; marker-end: url(#tip); }
.routes .w { stroke-width: 5; }
.beads { stroke: #f22; stroke-width: 18; stroke-linecap: round; }
.logo text { font: 700 46px "Liberation Sans", "Noto Sans CJK SC", sans-serif; }
.logo .du { font-size: 30px; fill: #fff; }
.logo .dt { font-size: 34px; fill: #fff; }

.dock { display: flex; height: 35px; align-items: flex-end; padding-left: 146px; border-bottom: 2px solid #000; }
.dock span { width: 48px; height: 2px; margin-bottom: -2px; background: #3c3c3c; }
```
